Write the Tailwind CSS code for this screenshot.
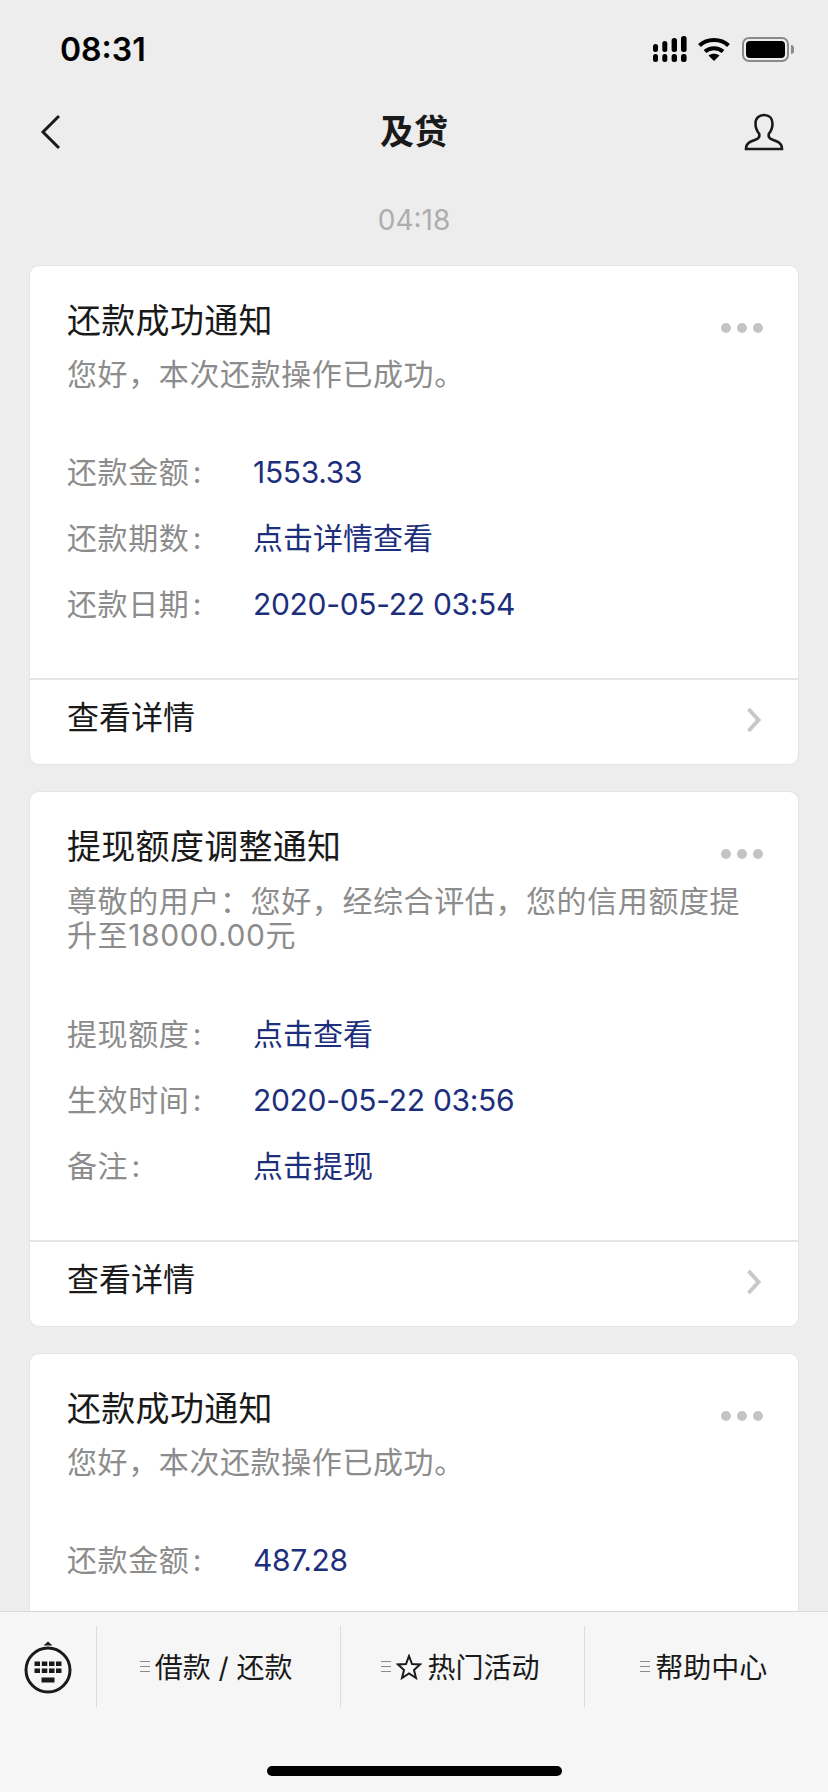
<!DOCTYPE html>
<html lang="zh-CN">
<head>
    <meta charset="UTF-8">
    <meta name="viewport" content="width=device-width, initial-scale=1.0">
    <title>及贷</title>
    <script src="https://cdn.jsdelivr.net/npm/@tailwindcss/browser@4"></script>
</head>
<body class="bg-[#ededed] font-['Inter','Noto_Sans_CJK_SC',sans-serif]">
<div class="relative w-[828px] h-[1792px] overflow-hidden">

    <!-- Status bar -->
    <div class="h-[88px] flex items-center justify-between pl-[60px] pr-[34px] pt-[10px]">
        <span class="text-[32px] font-semibold text-black leading-none mt-[1px]">08:31</span>
        <div class="flex items-center gap-[11px]">
            <svg width="34" height="27" viewBox="0 0 34 27" fill="#000">
                <rect x="0" y="8" width="5" height="8" rx="2.5"/><rect x="9.3" y="5" width="5" height="11" rx="2.5"/><rect x="18.6" y="2" width="5.4" height="14" rx="2.5"/><rect x="28" y="0" width="5.6" height="16" rx="2.5"/>
                <rect x="0" y="18" width="5" height="8" rx="2.5"/><rect x="9.3" y="18" width="5" height="8" rx="2.5"/><rect x="18.6" y="18" width="5.4" height="8" rx="2.5"/><rect x="28" y="18" width="5.6" height="8" rx="2.5"/>
            </svg>
            <svg width="32" height="25" viewBox="0 0 32 25" fill="none" stroke="#000" stroke-width="4" class="mr-[1px]">
                <path d="M1.5 8.5 C9 1 23 1 30.5 8.5"/><path d="M7 14.5 C12 10 20 10 25 14.5"/><path d="M16 24 L10.5 18.5 C13.5 16 18.5 16 21.5 18.5 Z" fill="#000" stroke="none"/>
            </svg>
            <div class="flex items-center">
                <div class="w-[47px] h-[25px] rounded-[7px] border-2 border-[#8a8a8a] p-[2px]">
                    <div class="w-full h-full rounded-[4px] bg-black"></div>
                </div>
                <div class="w-[3px] h-[9px] ml-[2px] rounded-r-full bg-[#8a8a8a]"></div>
            </div>
        </div>
    </div>

    <!-- Nav bar -->
    <div class="relative h-[88px] flex items-center justify-between pl-[40px] pr-[44px]">
        <svg width="22" height="38" viewBox="0 0 22 38" fill="none" stroke="#1a1a1a" stroke-width="3"><path d="M19 3 L3 19 L19 35"/></svg>
        <span class="absolute left-0 right-0 text-center text-[34px] font-bold text-[#1a1a1a] leading-none">及贷</span>
        <svg width="40" height="38" viewBox="0 0 40 38" fill="none" stroke="#1a1a1a" stroke-width="2.6"><path d="M2 36 C2 30 6 28.500 12 26.500 C15 25.500 16 23.500 15 20.500 C12.500 17.500 11.500 14 11.500 10.500 C11.500 5 15 2 20 2 C25 2 28.500 5 28.500 10.500 C28.500 14 27.500 17.500 25 20.500 C24 23.500 25 25.500 28 26.500 C34 28.500 38 30 38 36 Z"/></svg>
    </div>

    <!-- Time -->
    <div class="text-center text-[28px] text-[#adadad] leading-none pt-[30px] pb-[31px]">04:18</div>

    <!-- Cards -->
    <div class="flex flex-col gap-[26px] px-[29px]">

        <div class="bg-white rounded-[10px] border border-[#e4e4e4]">
            <div class="px-[37px] pt-[33px] pb-[52px]">
                <div class="flex items-center justify-between">
                    <h2 class="text-[34px] leading-[44px] tracking-[0.3px] text-[#1a1a1a]">还款成功通知</h2>
                    <div class="flex gap-[6px] mt-[14px] -mr-[2px]"><i class="w-[10px] h-[10px] rounded-full bg-[#c4c4c4]"></i><i class="w-[10px] h-[10px] rounded-full bg-[#c4c4c4]"></i><i class="w-[10px] h-[10px] rounded-full bg-[#c4c4c4]"></i></div>
                </div>
                <p class="text-[30px] leading-[34px] tracking-[0.6px] text-[#8c8c8c] mt-[14px]">您好，本次还款操作已成功。</p>
                <dl class="mt-[59px] flex flex-col gap-[22px] text-[30px] leading-[44px]">
                    <div class="flex"><dt class="w-[186px] tracking-[0.6px] text-[#8c8c8c]">还款金额&#8202;:</dt><dd class="tracking-[-0.3px] text-[#1d2f7c]">1553.33</dd></div>
                    <div class="flex"><dt class="w-[186px] tracking-[0.6px] text-[#8c8c8c]">还款期数&#8202;:</dt><dd class="text-[#1d2f7c]">点击详情查看</dd></div>
                    <div class="flex"><dt class="w-[186px] tracking-[0.6px] text-[#8c8c8c]">还款日期&#8202;:</dt><dd class="tracking-[-0.3px] text-[#1d2f7c]">2020-05-22 03:54</dd></div>
                </dl>
            </div>
            <div class="border-t-2 border-[#e5e5e5] px-[37px] h-[86px] flex items-center justify-between">
                <span class="text-[32px] text-[#1a1a1a] -mt-[8px]">查看详情</span>
                <svg width="16" height="26" viewBox="0 0 16 26" fill="none" stroke="#c8c8c8" stroke-width="4" class="-mr-[1px] -mt-[4px]"><path d="M2.500 2 L12.500 13 L2.500 24"/></svg>
            </div>
        </div>

        <div class="bg-white rounded-[10px] border border-[#e4e4e4]">
            <div class="px-[37px] pt-[33px] pb-[52px]">
                <div class="flex items-center justify-between">
                    <h2 class="text-[34px] leading-[44px] tracking-[0.3px] text-[#1a1a1a]">提现额度调整通知</h2>
                    <div class="flex gap-[6px] mt-[14px] -mr-[2px]"><i class="w-[10px] h-[10px] rounded-full bg-[#c4c4c4]"></i><i class="w-[10px] h-[10px] rounded-full bg-[#c4c4c4]"></i><i class="w-[10px] h-[10px] rounded-full bg-[#c4c4c4]"></i></div>
                </div>
                <p class="text-[30px] leading-[34px] tracking-[0.6px] text-[#8c8c8c] mt-[15px]">尊敬的用户：您好，经综合评估，您的信用额度提升至18000.00元</p>
                <dl class="mt-[60px] flex flex-col gap-[22px] text-[30px] leading-[44px]">
                    <div class="flex"><dt class="w-[186px] tracking-[0.6px] text-[#8c8c8c]">提现额度&#8202;:</dt><dd class="text-[#1d2f7c]">点击查看</dd></div>
                    <div class="flex"><dt class="w-[186px] tracking-[0.6px] text-[#8c8c8c]">生效时间&#8202;:</dt><dd class="tracking-[-0.3px] text-[#1d2f7c]">2020-05-22 03:56</dd></div>
                    <div class="flex"><dt class="w-[186px] tracking-[0.6px] text-[#8c8c8c]">备注&#8202;:</dt><dd class="text-[#1d2f7c]">点击提现</dd></div>
                </dl>
            </div>
            <div class="border-t-2 border-[#e5e5e5] px-[37px] h-[86px] flex items-center justify-between">
                <span class="text-[32px] text-[#1a1a1a] -mt-[8px]">查看详情</span>
                <svg width="16" height="26" viewBox="0 0 16 26" fill="none" stroke="#c8c8c8" stroke-width="4" class="-mr-[1px] -mt-[4px]"><path d="M2.500 2 L12.500 13 L2.500 24"/></svg>
            </div>
        </div>

        <!-- Last card runs on under the bottom menu -->
        <div class="bg-white rounded-[10px] border border-[#e4e4e4] h-[400px]">
            <div class="px-[37px] pt-[33px]">
                <div class="flex items-center justify-between">
                    <h2 class="text-[34px] leading-[44px] tracking-[0.3px] text-[#1a1a1a]">还款成功通知</h2>
                    <div class="flex gap-[6px] mt-[14px] -mr-[2px]"><i class="w-[10px] h-[10px] rounded-full bg-[#c4c4c4]"></i><i class="w-[10px] h-[10px] rounded-full bg-[#c4c4c4]"></i><i class="w-[10px] h-[10px] rounded-full bg-[#c4c4c4]"></i></div>
                </div>
                <p class="text-[30px] leading-[34px] tracking-[0.6px] text-[#8c8c8c] mt-[14px]">您好，本次还款操作已成功。</p>
                <dl class="mt-[59px] flex flex-col gap-[22px] text-[30px] leading-[44px]">
                    <div class="flex"><dt class="w-[186px] tracking-[0.6px] text-[#8c8c8c]">还款金额&#8202;:</dt><dd class="tracking-[-0.3px] text-[#1d2f7c]">487.28</dd></div>
                </dl>
            </div>
        </div>
    </div>

    <!-- Bottom menu, lies over the scrolled list -->
    <div class="absolute left-0 right-0 bottom-0 h-[181px] bg-[#f6f6f6] border-t border-[#d9d9d9]">
        <div class="flex h-[81px] mt-[14px]">
            <div class="w-[97px] flex items-center justify-center border-r border-[#dcdcdc] pr-[1px]">
                <svg width="50" height="56" viewBox="0 0 50 56" fill="#1a1a1a">
                    <path d="M25 2.500 L29.500 6.500 L20.500 6.500 Z"/>
                    <circle cx="25" cy="31" r="22" fill="none" stroke="#1a1a1a" stroke-width="3"/>
                    <rect x="11.500" y="22.500" width="5.500" height="4.500"/><rect x="18.800" y="22.500" width="5.500" height="4.500"/><rect x="26" y="22.500" width="5.500" height="4.500"/><rect x="33" y="22.500" width="5.500" height="4.500"/>
                    <rect x="11.500" y="29.500" width="5.500" height="4.500"/><rect x="18.800" y="29.500" width="5.500" height="4.500"/><rect x="26" y="29.500" width="5.500" height="4.500"/><rect x="33" y="29.500" width="5.500" height="4.500"/>
                    <rect x="18.500" y="38.500" width="13" height="5"/>
                </svg>
            </div>
            <div class="flex-1 flex items-center justify-center gap-[5px] border-r border-[#dcdcdc] text-[28px] text-[#1a1a1a] pr-[5px]">
                <span class="w-[10px] h-[11px] border-y border-[#8c8c8c] flex items-center"><i class="block w-full h-px bg-[#8c8c8c]"></i></span>
                <span class="mt-[3px]">借款 / 还款</span>
            </div>
            <div class="flex-1 flex items-center justify-center gap-[5px] border-r border-[#dcdcdc] text-[28px] text-[#1a1a1a] pr-[4px]">
                <span class="w-[10px] h-[11px] border-y border-[#8c8c8c] flex items-center"><i class="block w-full h-px bg-[#8c8c8c]"></i></span>
                <svg width="26" height="26" viewBox="0 0 26 26" fill="none" stroke="#1a1a1a" stroke-width="2"><path d="M13 2 L16 10 L24 10.500 L18 16 L20 24 L13 19.500 L6 24 L8 16 L2 10.500 L10 10 Z"/></svg>
                <span class="mt-[3px]">热门活动</span>
            </div>
            <div class="flex-1 flex items-center justify-center gap-[5px] text-[28px] text-[#1a1a1a] pr-[5px]">
                <span class="w-[10px] h-[11px] border-y border-[#8c8c8c] flex items-center"><i class="block w-full h-px bg-[#8c8c8c]"></i></span>
                <span class="mt-[3px]">帮助中心</span>
            </div>
        </div>
        <div class="absolute left-[267px] bottom-[16px] w-[295px] h-[10px] rounded-full bg-black"></div>
    </div>
</div>
</body>
</html>
